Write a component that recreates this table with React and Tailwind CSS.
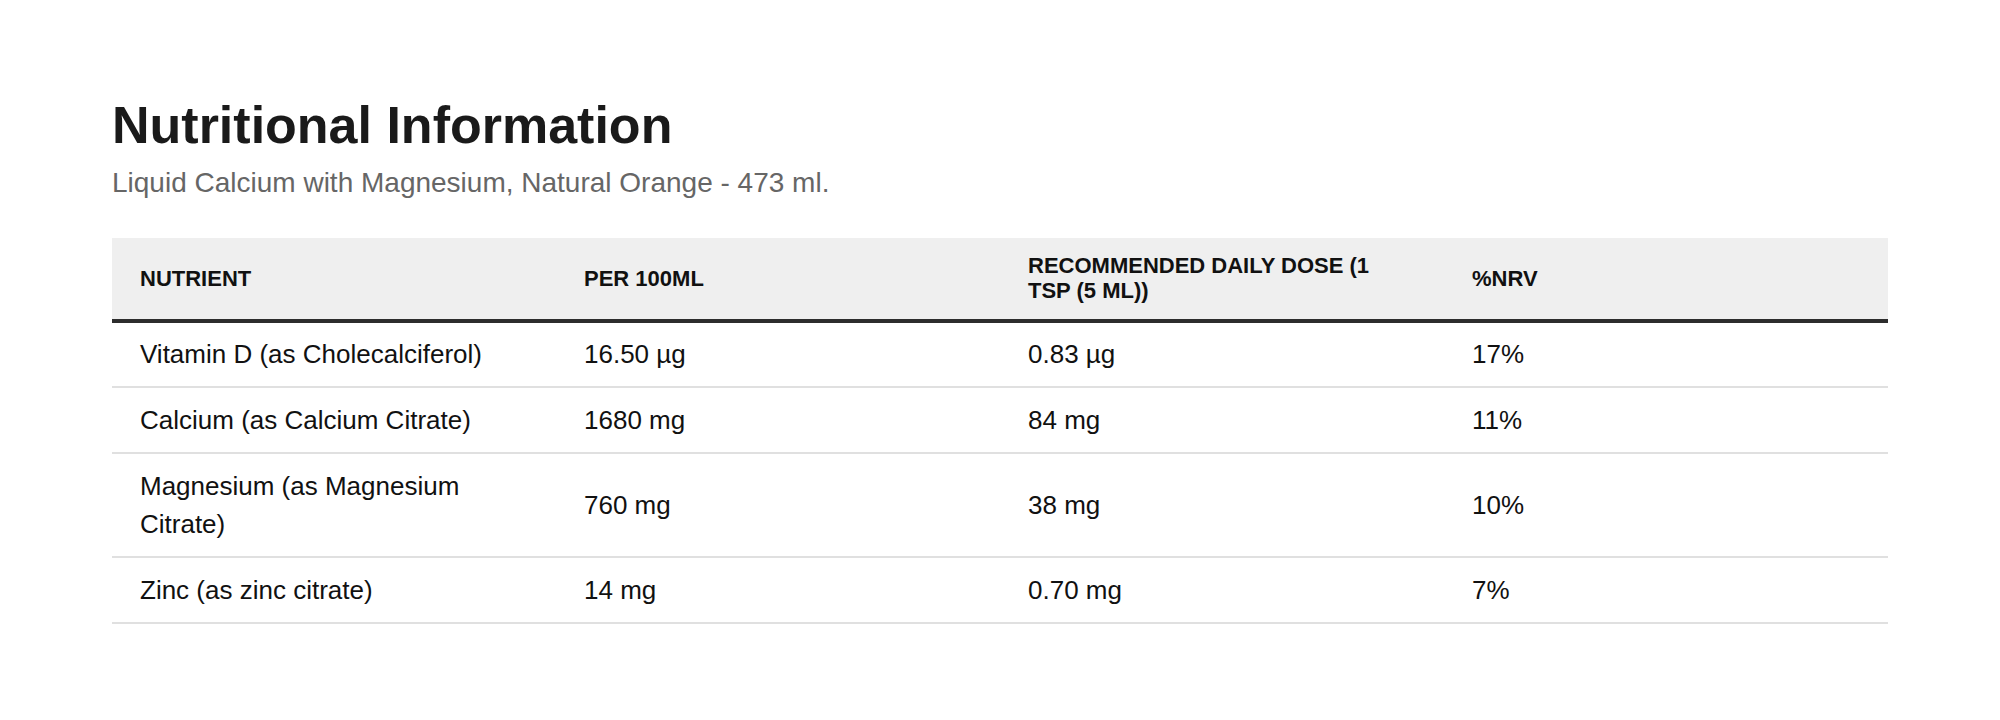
const ROWS = [
  { nutrient: 'Vitamin D (as Cholecalciferol)', per100: '16.50 µg', dose: '0.83 µg', nrv: '17%' },
  { nutrient: 'Calcium (as Calcium Citrate)', per100: '1680 mg', dose: '84 mg', nrv: '11%' },
  { nutrient: 'Magnesium (as Magnesium Citrate)', per100: '760 mg', dose: '38 mg', nrv: '10%' },
  { nutrient: 'Zinc (as zinc citrate)', per100: '14 mg', dose: '0.70 mg', nrv: '7%' },
];

const HEADERS = ['Nutrient', 'Per 100ml', 'Recommended Daily Dose (1 tsp (5 ml))', '%NRV'];

export default function App() {
  return (
    <div className="min-h-screen bg-white px-[112px] pt-[95px] font-['Liberation_Sans',Arial,sans-serif]">
      {/* Heading */}
      <h1 className="text-[52px] font-bold leading-[61.4px] text-[#1a1a1a]">
        Nutritional Information
      </h1>
      <p className="mt-[6px] mb-[34px] text-[28px] leading-[42px] text-[#666666]">
        Liquid Calcium with Magnesium, Natural Orange - 473 ml.
      </p>

      {/* Table */}
      <table className="w-full table-fixed">
        <thead>
          <tr>
            {HEADERS.map((h) => (
              <th
                key={h}
                className="bg-[#efefef] border-b-4 border-[#2d2d2d] px-7 py-4 text-left align-middle text-[22px] font-bold uppercase leading-[1.1] text-[#111111]"
              >
                {h}
              </th>
            ))}
          </tr>
        </thead>
        <tbody>
          {ROWS.map((row) => (
            <tr key={row.nutrient}>
              {[row.nutrient, row.per100, row.dose, row.nrv].map((cell, i) => (
                <td
                  key={i}
                  className="border-b-2 border-[#e0e0e0] px-7 py-[12.6px] align-middle text-[26px] leading-[38.4px] text-[#111111]"
                >
                  {cell}
                </td>
              ))}
            </tr>
          ))}
        </tbody>
      </table>
    </div>
  );
}
